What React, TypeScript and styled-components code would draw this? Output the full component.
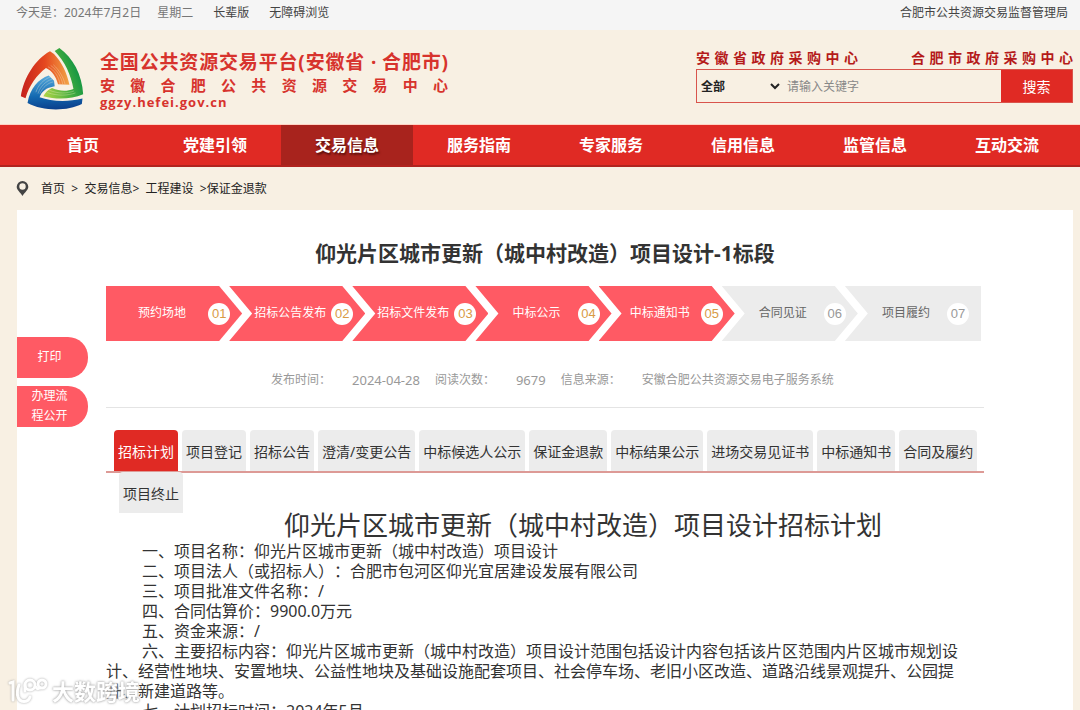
import React from 'react';
import styled, { createGlobalStyle, css } from 'styled-components';

const sans = `"Noto Sans", "Noto Sans CJK SC", sans-serif`;
const red = '#e02a24';
const coral = '#ff5a64';
const cream = '#f8f0e3';

const GlobalStyle = createGlobalStyle`
  * { box-sizing: border-box; }
  body { margin: 0; background: ${cream}; }
  button, input, select { font-family: inherit; margin: 0; }
  a { color: inherit; text-decoration: none; }
`;

const Page = styled.div`
  height: 100vh;
  overflow-y: auto;
  scrollbar-width: none;
  background: ${cream};
  color: #333;
  font: 12px/20px ${sans};
  text-spacing-trim: space-all;
`;

const TopBar = styled.div`
  display: flex;
  align-items: center;
  height: 30px;
  padding: 0 12px 4px 16px;
  background: #f5f5f5;
  color: #444;
`;
const Today = styled.span`
  color: #777;
  margin-right: 16px;
`;
const TopLink = styled.a`
  margin-right: 20px;
`;
const Weekday = styled.span`
  color: #777;
  margin-right: 20px;
`;
const BureauLink = styled.a`
  margin-left: auto;
`;

const Header = styled.header`
  display: flex;
  justify-content: space-between;
  align-items: flex-start;
  height: 95px;
  padding: 18px 7px 0 20px;
  border-bottom: 1px solid #ffd2c4;
`;
const Brand = styled.a`
  display: flex;
  gap: 16px;
  color: #d7332d;
  font-weight: 700;
`;
const BrandText = styled.div`
  width: 348px;
  padding-top: 2px;
  white-space: nowrap;
`;
const BrandName = styled.div`
  font-size: 19px;
  line-height: 24px;
  text-align-last: justify;
`;
const BrandCenter = styled.div`
  font-size: 15px;
  line-height: 22px;
  text-align-last: justify;
`;
const BrandUrl = styled.div`
  font-family: "Open Sans", sans-serif;
  font-size: 13px;
  line-height: 12px;
  letter-spacing: 1px;
`;

const SearchArea = styled.div`
  width: 377px;
`;
const CenterLinks = styled.div`
  display: flex;
  justify-content: space-between;
  height: 21px;
`;
const CenterLink = styled.a`
  width: 162px;
  color: #b51a1a;
  font-size: 14px;
  font-weight: 700;
  text-align-last: justify;
`;
const SearchForm = styled.form`
  display: flex;
  height: 34px;
  border: 1px solid #d9544c;
`;
const Scope = styled.select`
  width: 86px;
  border: 0;
  background: transparent;
  color: #222;
  font-size: 12px;
  font-weight: 700;
`;
const Keyword = styled.input`
  flex: 1;
  min-width: 0;
  border: 0;
  padding: 0 4px;
  background: transparent;
  font-size: 12px;
  &::placeholder { color: #888; }
`;
const SearchButton = styled.button`
  width: 71px;
  border: 0;
  background: ${red};
  color: #fff;
  font-size: 14px;
`;

const Nav = styled.nav`
  display: flex;
  height: 42px;
  padding: 0 7px 0 17px;
  background: ${red};
  border-bottom: 2px solid #b0241f;
`;
const NavLink = styled.a<{ $active?: boolean }>`
  flex: 1;
  color: #fff;
  font-size: 16px;
  font-weight: 700;
  line-height: 40px;
  text-align: center;
  ${p => p.$active && css`
    background: #a8231d;
    text-shadow: 1px 2px 2px #5c0f0c;
  `}
`;

const Crumbs = styled.div`
  display: flex;
  align-items: center;
  height: 43px;
  padding: 0 16px;
  color: #222;
  white-space: pre;
  svg { margin-right: 12px; }
`;

const Panel = styled.main`
  display: grid;
  grid-template-columns: 89px minmax(0, 1fr);
  margin: 0 7px 0 17px;
  padding-right: 89px;
  background: #fff;
`;
const Side = styled.aside`
  display: flex;
  flex-direction: column;
  gap: 8px;
  padding-top: 127px;
`;
const SideButton = styled.button`
  width: 71px;
  height: 41px;
  padding: 0 18px 2px 12px;
  border: 0;
  border-radius: 0 20px 20px 0;
  background: ${coral};
  color: #fff;
  font-size: 12px;
  line-height: 20px;
`;

const Title = styled.h1`
  margin: 0;
  padding: 28px 0 18px;
  font-size: 21px;
  line-height: 30px;
  text-align: center;
`;

const Steps = styled.ol`
  display: grid;
  grid-template-columns: repeat(7, minmax(0, 1fr));
  margin: 0;
  padding: 0 16px 0 0;
  list-style: none;
`;
const Step = styled.li<{ $done?: boolean }>`
  display: flex;
  align-items: center;
  height: 55px;
  padding: 0 12px 0 20px;
  margin-right: -13px;
  background: ${p => (p.$done ? coral : '#ececec')};
  color: ${p => (p.$done ? '#fff' : '#666')};
  clip-path: polygon(0 0, calc(100% - 23px) 0, 100% 50%, calc(100% - 23px) 100%, 0 100%, 23px 50%);
  &:first-child {
    padding-left: 10px;
    clip-path: polygon(0 0, calc(100% - 23px) 0, 100% 50%, calc(100% - 23px) 100%, 0 100%);
  }
  &:last-child {
    clip-path: polygon(0 0, 100% 0, 100% 100%, 0 100%, 23px 50%);
  }
`;
const StepName = styled.span`
  flex: 1;
  padding-bottom: 2px;
  text-align: center;
  white-space: nowrap;
`;
const StepNumber = styled.span<{ $done?: boolean }>`
  width: 22px;
  height: 22px;
  border-radius: 50%;
  background: #fff;
  color: ${p => (p.$done ? '#d99a45' : '#999')};
  font: 13px/22px "Liberation Sans", sans-serif;
  text-align: center;
`;

const Meta = styled.dl`
  display: flex;
  margin: 0;
  padding: 29px 0 17px 165px;
  border-bottom: 1px solid #e4e4e4;
  color: #999;
  dt { margin-right: 21px; }
  dd { margin: 0 15px 0 0; }
`;
const MetaNumber = styled.dd`
  font-size: 13px;
`;

const Tabs = styled.div`
  display: flex;
  gap: 4px;
  margin: 22px 0 -1px;
  padding: 0 8px;
  border-bottom: 2px solid #dd9a96;
`;
const TabsRest = styled.div`
  position: relative;
  padding-left: 13px;
`;
const Tab = styled.button<{ $active?: boolean }>`
  display: block;
  height: 41px;
  padding: 0 4px;
  border: 0;
  border-radius: 4px 4px 0 0;
  background: ${p => (p.$active ? red : '#ececec')};
  color: ${p => (p.$active ? '#fff' : '#333')};
  font-size: 14px;
  white-space: nowrap;
`;

const DocTitle = styled.h2`
  margin: 0;
  padding: 0 0 4px 76px;
  font-size: 26px;
  font-weight: 400;
  line-height: 24px;
  text-align: center;
`;
const Doc = styled.article`
  padding: 0 26px 20px 0;
  font-size: 16px;
  line-height: 20px;
  p { margin: 0; text-indent: 36px; }
`;

const Watermark = styled.div`
  position: fixed;
  left: 8px;
  bottom: 4px;
  display: flex;
  align-items: center;
  gap: 4px;
  color: #fff;
  font-size: 22px;
  font-weight: 700;
  line-height: 30px;
  text-shadow: 0 0 2px #999, 0 0 3px #aaa;
  opacity: 0.85;
  svg { filter: drop-shadow(0 0 1px #999); }
`;

const Logo = () => (
  <svg width="64" height="62" viewBox="31 24 190 185" aria-hidden="true">
    <defs>
      <linearGradient id="lr" x1="0" y1="0.6" x2="1" y2="0.6">
        <stop offset="0" stopColor="#c4201c" />
        <stop offset="0.5" stopColor="#e5481f" />
        <stop offset="1" stopColor="#f2a546" />
      </linearGradient>
      <linearGradient id="lg" x1="0" y1="1" x2="1" y2="0.5">
        <stop offset="0" stopColor="#b7d747" />
        <stop offset="0.55" stopColor="#4db13f" />
        <stop offset="1" stopColor="#089044" />
      </linearGradient>
      <linearGradient id="lb" x1="0.4" y1="0" x2="0.5" y2="1">
        <stop offset="0" stopColor="#55a9dc" />
        <stop offset="0.6" stopColor="#1268b0" />
        <stop offset="1" stopColor="#0b3f8c" />
      </linearGradient>
    </defs>
    <path fill="url(#lr)" d="M33 168C42 112 76 58 120 34L132 42C155 66 171 99 178 134L144 132C138 110 126 92 108 84C80 105 58 136 47 174Z" />
    <path fill="url(#lg)" d="M134 33L148 24C188 52 216 104 219 162C182 177 142 179 100 168C107 156 114 148 126 143C148 153 170 154 190 146C183 105 165 65 134 33Z" />
    <path fill="url(#lb)" d="M116 106C86 116 60 144 53 188C98 213 172 213 215 191L217 175C172 186 124 184 89 171C95 154 108 142 134 138L132 122Z" />
    <g fill="none" stroke="#fff3d8" strokeWidth="1.500" opacity="0.6">
      <path d="M114 80C134 90 146 110 150 132M122 76C142 90 154 112 158 132M130 74C148 90 160 112 165 132" />
      <path d="M122 110C100 118 84 136 78 156M126 117C106 124 92 138 84 160M130 125C112 129 98 142 90 160" />
      <path d="M118 150C145 161 170 160 192 152M112 157C145 168 172 166 196 158" />
    </g>
  </svg>
);

const Pin = () => (
  <svg width="13" height="15" viewBox="0 0 13 15" aria-hidden="true">
    <path fill="#444" fillRule="evenodd" d="M6.5 0A5.800 5.800 0 0 1 12.300 5.800C12.300 9 9 11 6.500 15C4 11 0.700 9 0.700 5.800A5.800 5.800 0 0 1 6.500 0ZM6.500 2.300A3.200 3.200 0 1 0 6.500 8.700A3.200 3.200 0 1 0 6.500 2.300Z" />
  </svg>
);

const WatermarkLogo = () => (
  <svg width="40" height="28" viewBox="0 0 40 28" fill="none" stroke="#fff" strokeWidth="3" strokeLinecap="round" aria-hidden="true">
    <path d="M2 6L5 5V23M11 8C9 13 9 17 10 20C12 26 20 26 22 20" />
    <circle cx="22" cy="8" r="5" />
    <circle cx="34" cy="7" r="4" />
    <path d="M17 8V14M28 10C29 12 30 12 32 11" />
  </svg>
);

const navItems = ['首页', '党建引领', '交易信息', '服务指南', '专家服务', '信用信息', '监管信息', '互动交流'];
const steps = ['预约场地', '招标公告发布', '招标文件发布', '中标公示', '中标通知书', '合同见证', '项目履约'];
const doneSteps = 5;
const tabs = ['招标计划', '项目登记', '招标公告', '澄清/变更公告', '中标候选人公示', '保证金退款', '中标结果公示', '进场交易见证书', '中标通知书', '合同及履约'];
const paragraphs = [
  '一、项目名称：仰光片区城市更新（城中村改造）项目设计',
  '二、项目法人（或招标人）：合肥市包河区仰光宜居建设发展有限公司',
  '三、项目批准文件名称：/',
  '四、合同估算价：9900.0万元',
  '五、资金来源：/',
  '六、主要招标内容：仰光片区城市更新（城中村改造）项目设计范围包括设计内容包括该片区范围内片区城市规划设计、经营性地块、安置地块、公益性地块及基础设施配套项目、社会停车场、老旧小区改造、道路沿线景观提升、公园提升、新建道路等。',
  '七、计划招标时间：2024年5月',
];

export default function App() {
  return (
    <Page>
      <GlobalStyle />
      <TopBar>
        <Today>今天是：2024年7月2日</Today>
        <Weekday>星期二</Weekday>
        <TopLink href="#">长辈版</TopLink>
        <TopLink href="#">无障碍浏览</TopLink>
        <BureauLink href="#">合肥市公共资源交易监督管理局</BureauLink>
      </TopBar>

      <Header>
        <Brand href="#">
          <Logo />
          <BrandText>
            <BrandName>全国公共资源交易平台(安徽省 · 合肥市)</BrandName>
            <BrandCenter>安徽合肥公共资源交易中心</BrandCenter>
            <BrandUrl>ggzy.hefei.gov.cn</BrandUrl>
          </BrandText>
        </Brand>
        <SearchArea>
          <CenterLinks>
            <CenterLink href="#">安徽省政府采购中心</CenterLink>
            <CenterLink href="#">合肥市政府采购中心</CenterLink>
          </CenterLinks>
          <SearchForm onSubmit={e => e.preventDefault()}>
            <Scope aria-label="搜索范围">
              <option>全部</option>
            </Scope>
            <Keyword aria-label="关键字" placeholder="请输入关键字" />
            <SearchButton type="submit">搜索</SearchButton>
          </SearchForm>
        </SearchArea>
      </Header>

      <Nav>
        {navItems.map(name => (
          <NavLink key={name} href="#" $active={name === '交易信息'}>{name}</NavLink>
        ))}
      </Nav>

      <Crumbs>
        <Pin />
        <a href="#">首页</a>{'  >  '}
        <a href="#">交易信息</a>{'>  '}
        <a href="#">工程建设</a>{'  >'}
        <a href="#">保证金退款</a>
      </Crumbs>

      <Panel>
        <Side>
          <SideButton>打印</SideButton>
          <SideButton>办理流程公开</SideButton>
        </Side>
        <div>
          <Title>仰光片区城市更新（城中村改造）项目设计-1标段</Title>
          <Steps>
            {steps.map((name, i) => (
              <Step key={name} $done={i < doneSteps}>
                <StepName>{name}</StepName>
                <StepNumber $done={i < doneSteps}>{`0${i + 1}`}</StepNumber>
              </Step>
            ))}
          </Steps>
          <Meta>
            <dt>发布时间：</dt>
            <MetaNumber>2024-04-28</MetaNumber>
            <dt>阅读次数：</dt>
            <MetaNumber>9679</MetaNumber>
            <dt>信息来源：</dt>
            <dd>安徽合肥公共资源交易电子服务系统</dd>
          </Meta>
          <Tabs>
            {tabs.map((name, i) => (
              <Tab key={name} $active={i === 0}>{name}</Tab>
            ))}
          </Tabs>
          <TabsRest>
            <Tab>项目终止</Tab>
          </TabsRest>
          <DocTitle>仰光片区城市更新（城中村改造）项目设计招标计划</DocTitle>
          <Doc>
            {paragraphs.map(text => <p key={text}>{text}</p>)}
          </Doc>
        </div>
      </Panel>

      <Watermark>
        <WatermarkLogo />
        大数跨境
      </Watermark>
    </Page>
  );
}
